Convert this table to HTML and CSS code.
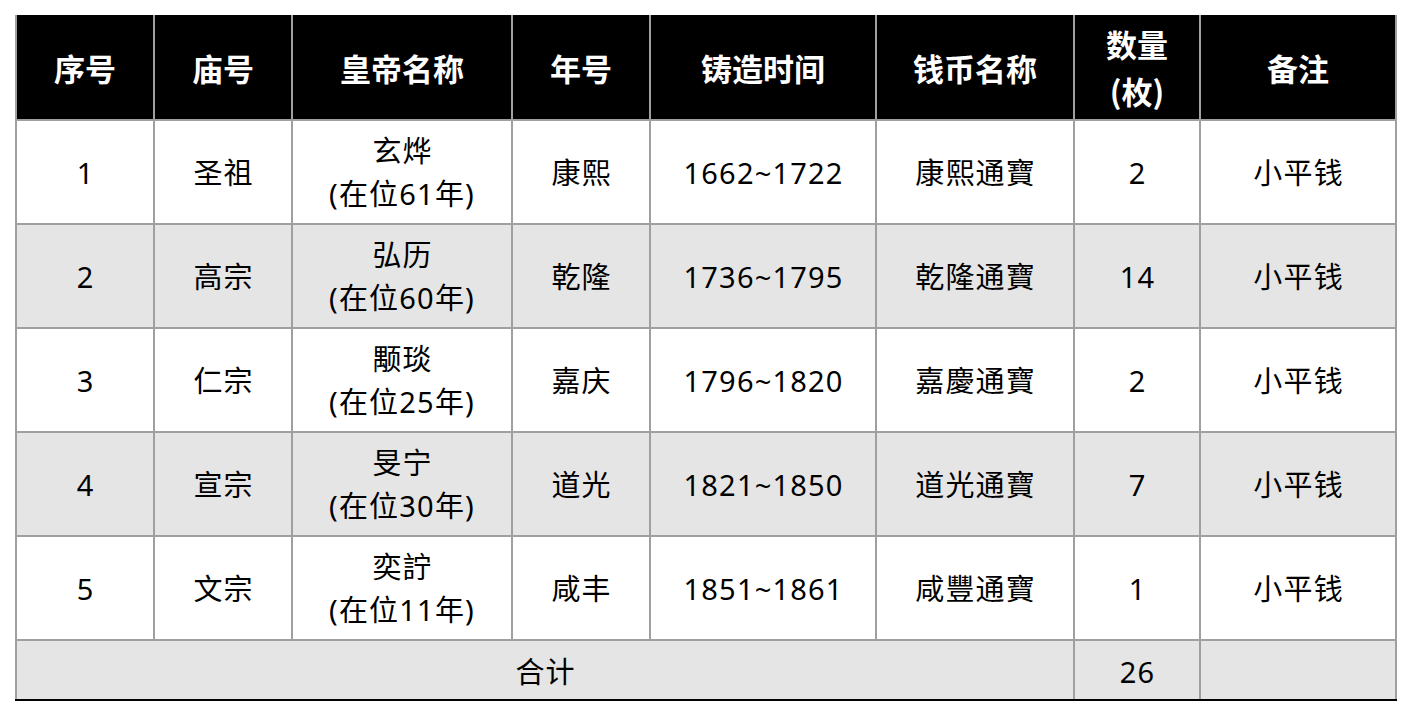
FILE: index.html
```html
<!DOCTYPE html>
<html lang="zh">
<head>
<meta charset="utf-8">
<title>清代钱币</title>
<link rel="stylesheet" href="styles.css">
</head>
<body>
<div class="wrap">
<table class="coins">
<colgroup>
<col class="c1"><col class="c2"><col class="c3"><col class="c4"><col class="c5"><col class="c6"><col class="c7"><col class="c8">
</colgroup>
<thead>
<tr>
<th>序号</th><th>庙号</th><th>皇帝名称</th><th>年号</th><th>铸造时间</th><th>钱币名称</th><th>数量<br>(枚)</th><th>备注</th>
</tr>
</thead>
<tbody>
<tr><td>1</td><td>圣祖</td><td>玄烨<br>(在位61年)</td><td>康熙</td><td>1662~1722</td><td>康熙通寶</td><td>2</td><td>小平钱</td></tr>
<tr class="alt"><td>2</td><td>高宗</td><td>弘历<br>(在位60年)</td><td>乾隆</td><td>1736~1795</td><td>乾隆通寶</td><td>14</td><td>小平钱</td></tr>
<tr><td>3</td><td>仁宗</td><td>颙琰<br>(在位25年)</td><td>嘉庆</td><td>1796~1820</td><td>嘉慶通寶</td><td>2</td><td>小平钱</td></tr>
<tr class="alt"><td>4</td><td>宣宗</td><td>旻宁<br>(在位30年)</td><td>道光</td><td>1821~1850</td><td>道光通寶</td><td>7</td><td>小平钱</td></tr>
<tr><td>5</td><td>文宗</td><td>奕詝<br>(在位11年)</td><td>咸丰</td><td>1851~1861</td><td>咸豐通寶</td><td>1</td><td>小平钱</td></tr>
<tr class="alt total"><td colspan="6">合计</td><td>26</td><td></td></tr>
</tbody>
</table>
</div>
</body>
</html>
```
FILE: styles.css
```css
html, body {
  margin: 0;
  padding: 0;
  background: #ffffff;
}
.wrap {
  padding: 15px 0 0 15px;
}
.coins {
  border-collapse: collapse;
  table-layout: fixed;
  width: 1380px;
  font-family: "Noto Sans", "Noto Sans CJK SC", sans-serif;
  color: #000;
  border-left: 2px solid #000;
  border-bottom: 2px solid #000;
}
.c1 { width: 138px; }
.c2 { width: 138px; }
.c3 { width: 220px; }
.c4 { width: 138px; }
.c5 { width: 226px; }
.c6 { width: 198px; }
.c7 { width: 126px; }
.c8 { width: 196px; }
.coins th {
  background: #000;
  color: #fff;
  font-weight: 700;
  font-size: 31px;
  line-height: 47px;
  height: 104px;
  padding: 0;
  text-align: center;
  border: 2px solid #a0a0a0;
  border-top: none;
  font-family: "Noto Sans CJK SC", sans-serif;
}
.coins td {
  font-size: 29px;
  letter-spacing: 1.2px;
  text-indent: 1.2px;
  line-height: 43px;
  height: 102px;
  padding: 0;
  text-align: center;
  vertical-align: middle;
  border: 2px solid #a0a0a0;
  background: #fff;
}
.coins tr.alt td {
  background: #e5e5e5;
}
.coins tr.total td {
  height: 56px;
  padding-top: 2px;
  border-bottom: 2px solid #000;
}
```
